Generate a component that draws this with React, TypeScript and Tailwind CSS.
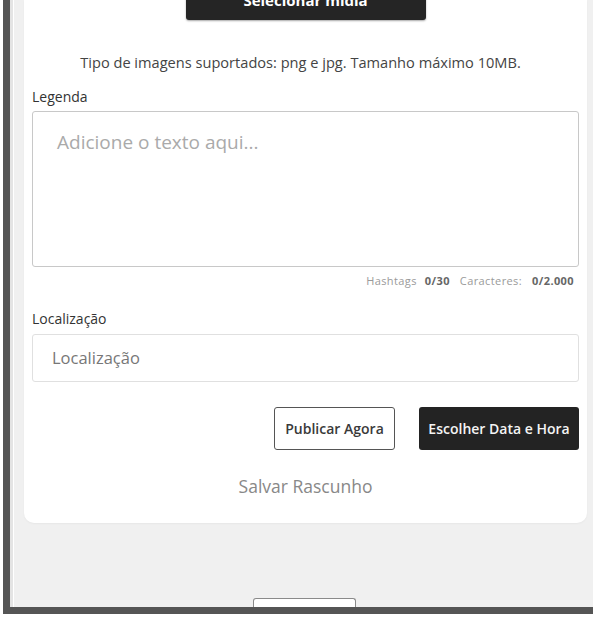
const FONT = { fontFamily: '"Open Sans", "Noto Sans", Arial, sans-serif' };

export default function App() {
  return (
    <div className="h-[618px] w-[600px] overflow-hidden bg-white" style={FONT}>
      {/* screenshot frame with dark left/bottom edge */}
      <div className="ml-[3px] h-[614px] w-[590px] border-b-[7px] border-l-[7px] border-[#555555]">
        <div className="flex h-full flex-col border-l-[3px] border-[#e4e4e4]">
          <div className="flex h-full flex-col border-l border-white bg-[#f0f0f0]">
            <div className="ml-[10px] flex w-[563px] flex-col rounded-b-[10px] bg-white px-[8px] pb-[26px] shadow-[0_1px_2px_rgba(0,0,0,0.04)]">
              <div className="flex justify-center">
                <button
                  type="button"
                  className="-mt-[20px] h-[40px] w-[240px] rounded-[3px] bg-[#252525] text-[15px] font-bold text-white shadow-[0_1px_2px_rgba(0,0,0,0.35)]"
                >
                  Selecionar mídia
                </button>
              </div>

              <p className="mt-[32px] pr-[10px] text-center text-[14.6px] leading-[20px] text-[#444]">
                Tipo de imagens suportados: png e jpg. Tamanho máximo 10MB.
              </p>

              <label className="mt-[16px] text-[14px] leading-[18px] text-[#333]">Legenda</label>
              <div className="mt-[5px] h-[156px] rounded-[3px] border border-[#c8c8c8] px-[24px] py-[16px] text-[19px] leading-[28px] text-[#aaaaaa]">
                Adicione o texto aqui...
              </div>
              <div className="mt-[7px] flex justify-end pr-[5px] text-[11px] leading-[14px] tracking-[0.4px] text-[#9a9a9a]">
                <span>Hashtags</span>
                <span className="ml-[8px] font-bold text-[#666]">0/30</span>
                <span className="ml-[10px]">Caracteres:</span>
                <span className="ml-[10px] font-bold text-[#666]">0/2.000</span>
              </div>

              <label className="mt-[22px] text-[14px] leading-[18px] text-[#333]">Localização</label>
              <div className="mt-[6px] flex h-[48px] items-center rounded-[3px] border border-[#e0e0e0] px-[19px] text-[16.5px] text-[#777]">
                Localização
              </div>

              <div className="mt-[25px] flex justify-end gap-[24px]">
                <button
                  type="button"
                  className="h-[43px] w-[121px] rounded-[3px] border border-[#555] bg-white text-[14px] font-semibold text-[#3a3a3a]"
                >
                  Publicar Agora
                </button>
                <button
                  type="button"
                  className="h-[43px] w-[160px] rounded-[3px] bg-[#232323] text-[14px] font-semibold text-[#f4f4f4]"
                >
                  Escolher Data e Hora
                </button>
              </div>

              <p className="mt-[25px] text-center text-[17.5px] leading-[22px] text-[#888]">Salvar Rascunho</p>
            </div>

            <div className="mt-auto flex justify-center overflow-hidden pl-[2px]">
              <div className="h-[9px] w-[103px] rounded-t-[3px] border border-b-0 border-[#8a8a8a] bg-white" />
            </div>
          </div>
        </div>
      </div>
    </div>
  );
}
